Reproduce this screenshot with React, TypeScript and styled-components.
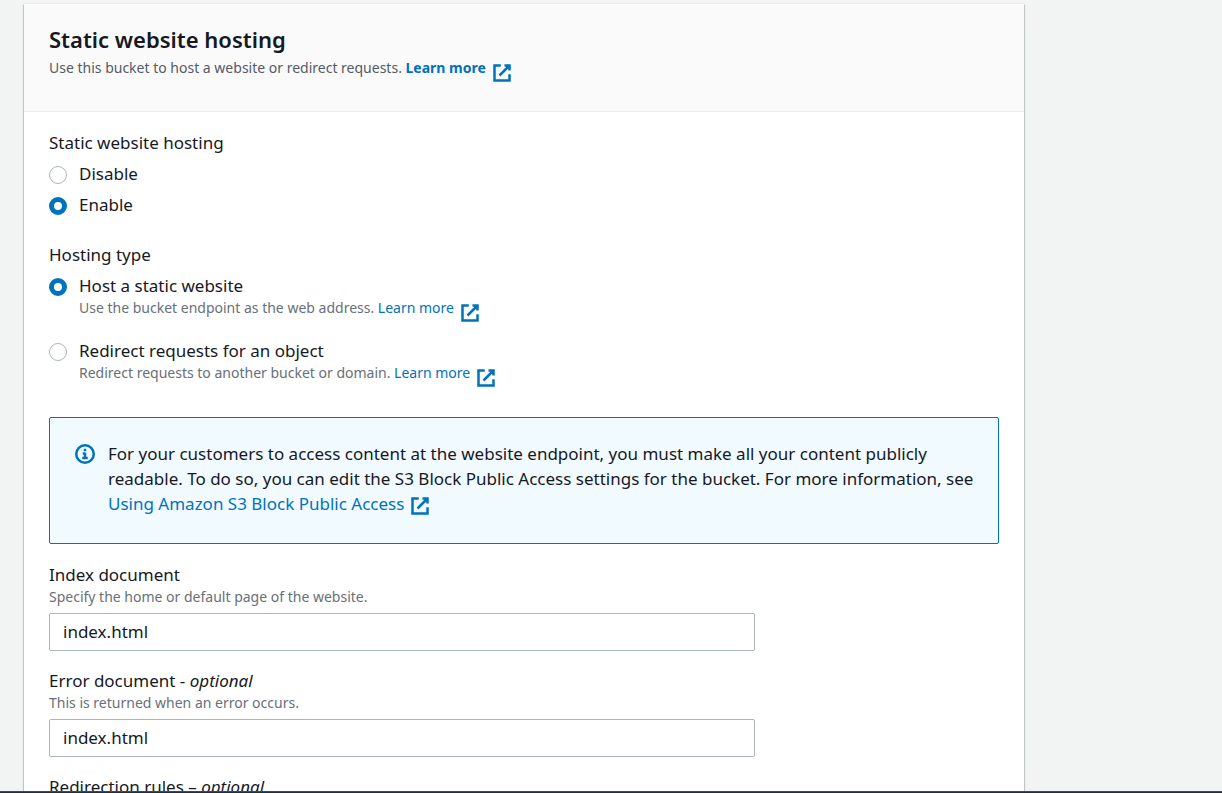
import React from "react";
import styled, { createGlobalStyle } from "styled-components";

const GlobalStyle = createGlobalStyle`
  *, *::before, *::after { box-sizing: border-box; }
  body {
    margin: 0;
    background: #f2f3f3;
    color: #16191f;
    font-family: "Noto Sans", "Open Sans", sans-serif;
    font-size: 17px;
    line-height: 24px;
  }
`;

const Shell = styled.div`
  display: flex;
  flex-direction: column;
  height: 100vh;
`;

const Main = styled.main`
  flex: 1;
  min-height: 0;
  overflow-y: auto;
  scrollbar-width: none;
  padding: 4px 198px 24px 24px;
`;

const FooterBar = styled.footer`
  flex: none;
  height: 2px;
  background: #232f3e;
  border-top: 1px solid #414750;
`;

const Panel = styled.section`
  background: #fff;
  box-shadow: 1px 1px 1px 0 rgba(0, 28, 36, 0.18),
    -1px 1px 1px 0 rgba(0, 28, 36, 0.18), 0 0 0 1px #eaeded;
`;

const PanelHeader = styled.header`
  padding: 20px 25px 29px;
  background: #fafafa;
  border-bottom: 1px solid #eaeded;
`;

const Title = styled.h2`
  margin: 0;
  font-size: 22px;
  line-height: 30px;
  font-weight: 600;
`;

const HeaderText = styled.p`
  margin: 0;
  font-size: 14px;
  line-height: 28px;
  color: #545b64;
`;

const PanelBody = styled.div`
  padding: 19px 25px 24px;
`;

const RadioGroup = styled.fieldset<{ $after: number }>`
  margin: 0 0 ${(p) => p.$after}px;
  padding: 0;
  border: 0;
`;

const Legend = styled.legend`
  padding: 0;
  margin-bottom: 7px;
`;

const Options = styled.div<{ $gap: number }>`
  display: flex;
  flex-direction: column;
  gap: ${(p) => p.$gap}px;
`;

const Option = styled.div`
  display: flex;
  align-items: flex-start;
  gap: 12px;
`;

const Radio = styled.input`
  appearance: none;
  flex: none;
  width: 18px;
  height: 18px;
  margin: 4px 0 0;
  border: 1px solid #aab7b8;
  border-radius: 50%;
  background: #fff;
  &:checked {
    border: 5px solid #0073bb;
  }
`;

const OptionText = styled.div`
  display: flex;
  flex-direction: column;
`;

const Hint = styled.span`
  display: block;
  font-size: 14px;
  line-height: 20px;
  color: #687078;
`;

const Link = styled.a<{ $bold?: boolean }>`
  color: #0073bb;
  text-decoration: none;
  font-weight: ${(p) => (p.$bold ? 700 : 400)};
`;

const LinkIcon = styled.svg<{ $drop: number }>`
  width: 20px;
  height: 20px;
  margin: -8px 0 -8px 6px;
  vertical-align: ${(p) => -p.$drop}px;
  fill: none;
  stroke: currentColor;
  stroke-width: 2;
`;

const Alert = styled.div`
  display: flex;
  gap: 13px;
  margin-bottom: 19px;
  padding: 23px 16px 27px 25px;
  background: #f1faff;
  border: 1px solid #0073bb;
  border-radius: 2px;
`;

const InfoIcon = styled.svg`
  flex: none;
  width: 20px;
  height: 20px;
  margin-top: 3px;
  fill: none;
  stroke: #0073bb;
  stroke-width: 2;
`;

const AlertText = styled.p`
  margin: 0;
  line-height: 25px;
`;

const Field = styled.div`
  margin-bottom: 18px;
`;

const FieldLabel = styled.label`
  display: block;
`;

const TextInput = styled.input`
  display: block;
  width: calc(75% - 7px);
  height: 38px;
  margin-top: 6px;
  padding: 0 13px 2px;
  border: 1px solid #aab7b8;
  border-radius: 2px;
  background: #fff;
  color: #16191f;
  font: inherit;
`;

function ExternalLink({ children, bold, drop = 2 }: { children: React.ReactNode; bold?: boolean; drop?: number }) {
  return (
    <Link href="#" $bold={bold}>
      {children}
      <LinkIcon viewBox="0 0 16 16" $drop={drop} aria-hidden="true">
        <path d="M10 2h4v4M6 10l8-8M14 9.05V14H2V2h5" />
      </LinkIcon>
    </Link>
  );
}

export default function App() {
  return (
    <>
      <GlobalStyle />
      <Shell>
        <Main>
          <Panel>
            <PanelHeader>
              <Title>Static website hosting</Title>
              <HeaderText>
                Use this bucket to host a website or redirect requests. <ExternalLink bold>Learn more</ExternalLink>
              </HeaderText>
            </PanelHeader>
            <PanelBody>
              <RadioGroup $after={26}>
                <Legend>Static website hosting</Legend>
                <Options $gap={7}>
                  <Option>
                    <Radio type="radio" name="hosting" id="disable" />
                    <label htmlFor="disable">Disable</label>
                  </Option>
                  <Option>
                    <Radio type="radio" name="hosting" id="enable" defaultChecked />
                    <label htmlFor="enable">Enable</label>
                  </Option>
                </Options>
              </RadioGroup>
              <RadioGroup $after={34}>
                <Legend>Hosting type</Legend>
                <Options $gap={21}>
                  <Option>
                    <Radio type="radio" name="type" id="static" defaultChecked />
                    <OptionText>
                      <label htmlFor="static">Host a static website</label>
                      <Hint>
                        Use the bucket endpoint as the web address. <ExternalLink>Learn more</ExternalLink>
                      </Hint>
                    </OptionText>
                  </Option>
                  <Option>
                    <Radio type="radio" name="type" id="redirect" />
                    <OptionText>
                      <label htmlFor="redirect">Redirect requests for an object</label>
                      <Hint>
                        Redirect requests to another bucket or domain. <ExternalLink>Learn more</ExternalLink>
                      </Hint>
                    </OptionText>
                  </Option>
                </Options>
              </RadioGroup>
              <Alert>
                <InfoIcon viewBox="0 0 16 16" aria-hidden="true">
                  <circle cx="8" cy="8" r="7" />
                  <path d="M5.8 11.2h4.4M6.2 7.6h2M8 7v4M8 3.8v2" />
                </InfoIcon>
                <AlertText>
                  For your customers to access content at the website endpoint, you must make all your content publicly
                  readable. To do so, you can edit the S3 Block Public Access settings for the bucket. For more
                  information, see <ExternalLink drop={-2}>Using Amazon S3 Block Public Access</ExternalLink>
                </AlertText>
              </Alert>
              <Field>
                <FieldLabel htmlFor="index-doc">Index document</FieldLabel>
                <Hint>Specify the home or default page of the website.</Hint>
                <TextInput id="index-doc" defaultValue="index.html" />
              </Field>
              <Field>
                <FieldLabel htmlFor="error-doc">
                  Error document - <em>optional</em>
                </FieldLabel>
                <Hint>This is returned when an error occurs.</Hint>
                <TextInput id="error-doc" defaultValue="index.html" />
              </Field>
              <Field>
                <FieldLabel htmlFor="rules">
                  Redirection rules – <em>optional</em>
                </FieldLabel>
                <TextInput id="rules" />
              </Field>
            </PanelBody>
          </Panel>
        </Main>
        <FooterBar />
      </Shell>
    </>
  );
}
